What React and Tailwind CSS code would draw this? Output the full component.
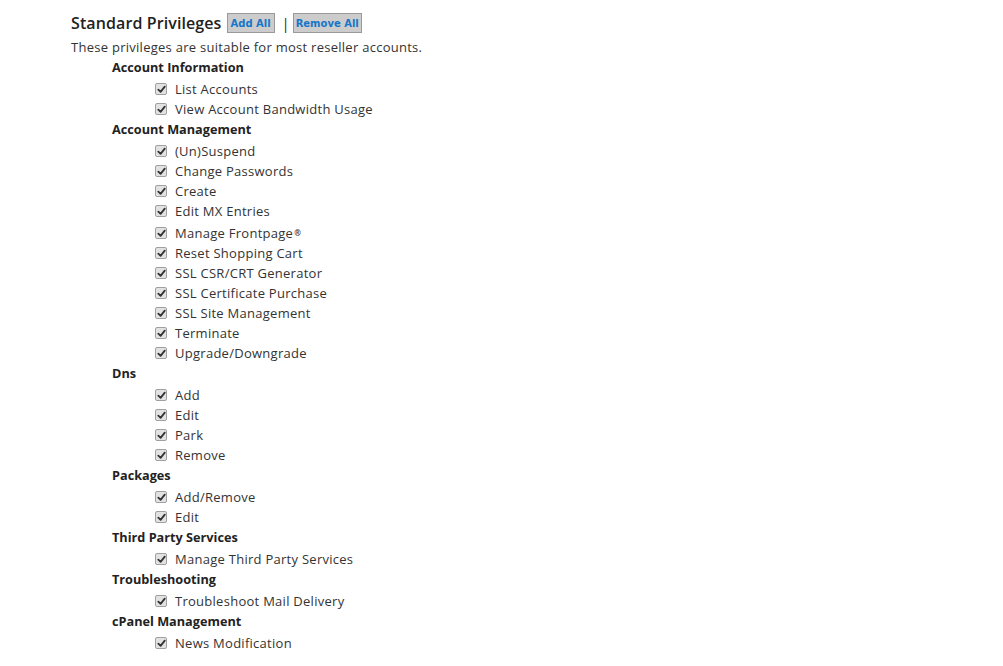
import React from 'react';

const groups = [
  { title: 'Account Information', items: ['List Accounts', 'View Account Bandwidth Usage'] },
  {
    title: 'Account Management',
    items: [
      '(Un)Suspend',
      'Change Passwords',
      'Create',
      'Edit MX Entries',
      'Manage Frontpage®',
      'Reset Shopping Cart',
      'SSL CSR/CRT Generator',
      'SSL Certificate Purchase',
      'SSL Site Management',
      'Terminate',
      'Upgrade/Downgrade',
    ],
  },
  { title: 'Dns', items: ['Add', 'Edit', 'Park', 'Remove'] },
  { title: 'Packages', items: ['Add/Remove', 'Edit'] },
  { title: 'Third Party Services', items: ['Manage Third Party Services'] },
  { title: 'Troubleshooting', items: ['Troubleshoot Mail Delivery'] },
  { title: 'cPanel Management', items: ['News Modification'] },
];

function Check() {
  return (
    <span className="flex h-[12px] w-[12px] shrink-0 items-center justify-center rounded-[2px] border border-[#a0a0a0] bg-[#e2e2e2]">
      <svg width="9" height="9" viewBox="0 0 10 10">
        <path d="M1.5 5.2 L4 7.6 L8.6 1.8" fill="none" stroke="#333" strokeWidth="2" strokeLinecap="round" strokeLinejoin="round" />
      </svg>
    </span>
  );
}

function Label({ text }) {
  if (text.endsWith('®')) {
    return (
      <span>
        {text.slice(0, -1)}
        <sup className="relative -top-[2px] ml-[1px] text-[8px] font-bold">®</sup>
      </span>
    );
  }
  return <span>{text}</span>;
}

export default function App() {
  return (
    <div className="min-h-[666px] bg-white pl-[71px] pt-[12px] font-['Open_Sans',sans-serif] text-[13px] tracking-[0.27px] text-[#333]">
      <div className="flex h-[22px] items-center">
        <span className="text-[16px] font-semibold tracking-[0.1px] text-[#222]">Standard Privileges</span>
        <button className="ml-[5px] h-[20px] border border-[#9a9a9a] bg-[#cccccc] px-[3px] font-['DejaVu_Sans',sans-serif] text-[10px] font-bold tracking-normal text-[#1577c9]">
          Add All
        </button>
        <span className="ml-[7px] mr-[3px] text-[14px] text-[#222]">|</span>
        <button className="h-[20px] border border-[#9a9a9a] bg-[#cccccc] px-[2px] font-['DejaVu_Sans',sans-serif] text-[10px] font-bold tracking-normal text-[#1577c9]">
          Remove All
        </button>
      </div>
      <div className="mt-[3px] h-[20px] leading-[20px]">These privileges are suitable for most reseller accounts.</div>
      <div className="pl-[41px]">
        {groups.map((g) => (
          <div key={g.title}>
            <div className="h-[20px] text-[12.7px] font-bold leading-[20px] tracking-normal text-[#222]">{g.title}</div>
            <div className="mt-[2px] pl-[43px]">
              {g.items.map((it) => (
                <div key={it} className={`flex items-center gap-[8px] leading-[20px] ${it.endsWith('®') ? 'h-[22px] pt-[2px]' : 'h-[20px]'}`}>
                  <Check />
                  <Label text={it} />
                </div>
              ))}
            </div>
          </div>
        ))}
      </div>
    </div>
  );
}
